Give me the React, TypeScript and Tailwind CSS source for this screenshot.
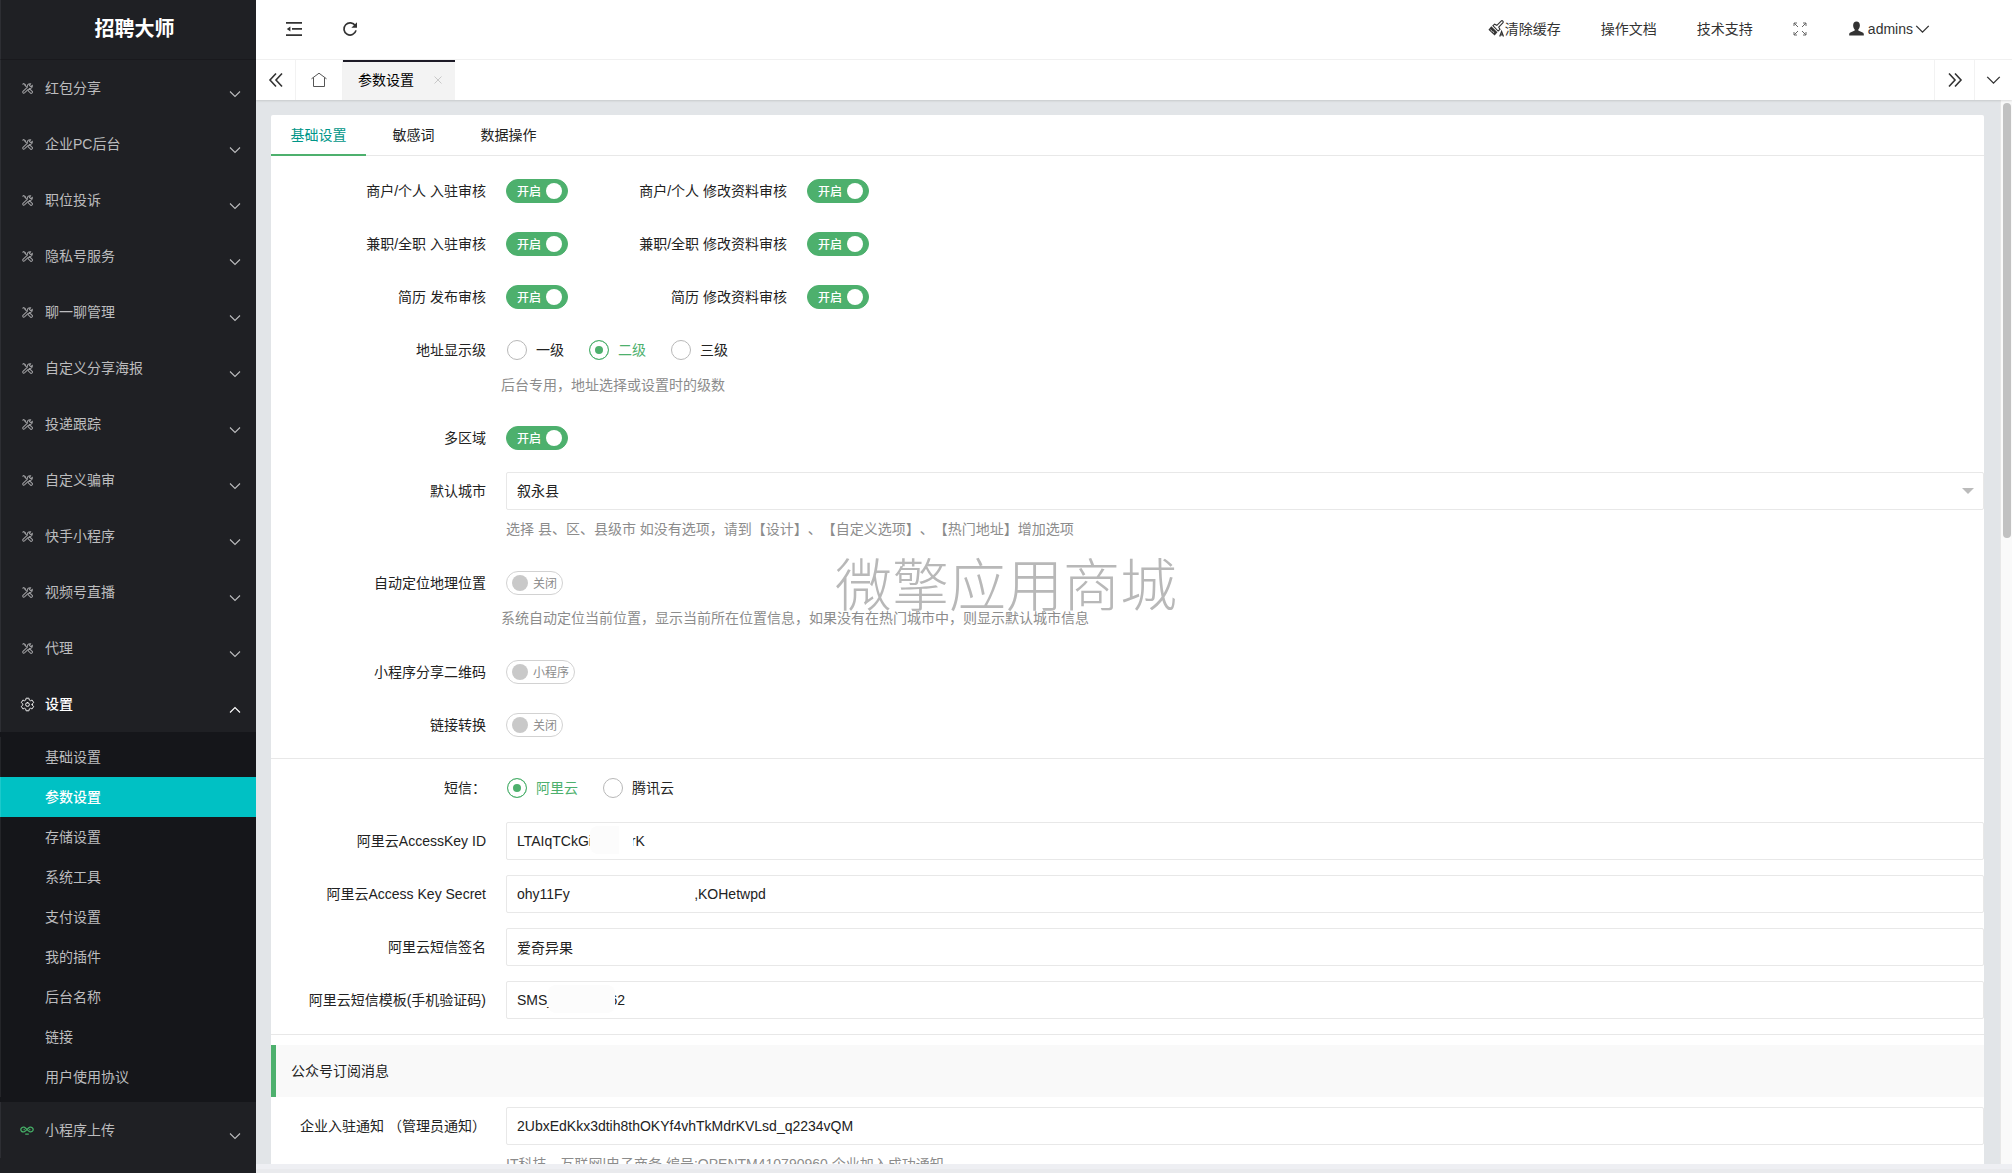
import { useState } from 'react';
import type { ReactNode } from 'react';
import clsx from 'clsx';
import { IoSettingsOutline } from 'react-icons/io5';

type SwitchProps = {
  id: string;
  on?: string;
  off?: string;
  defaultChecked?: boolean;
};

type RadioGroupProps = {
  name: string;
  options: string[];
  defaultValue: string;
};

const menuItems = [
  '红包分享',
  '企业PC后台',
  '职位投诉',
  '隐私号服务',
  '聊一聊管理',
  '自定义分享海报',
  '投递跟踪',
  '自定义骗审',
  '快手小程序',
  '视频号直播',
  '代理',
];

const settingItems = [
  '基础设置',
  '参数设置',
  '存储设置',
  '系统工具',
  '支付设置',
  '我的插件',
  '后台名称',
  '链接',
  '用户使用协议',
];

const auditRows = [
  { id: 'merchant', join: '商户/个人 入驻审核', edit: '商户/个人 修改资料审核' },
  { id: 'job', join: '兼职/全职 入驻审核', edit: '兼职/全职 修改资料审核' },
  { id: 'resume', join: '简历 发布审核', edit: '简历 修改资料审核' },
];

function ToolsIcon() {
  return (
    <svg viewBox="0 0 16 16" className="ml-0.5 size-[11px] text-[#9c9c9f]" fill="none" stroke="currentColor" strokeWidth="1.5">
      <path d="M.8 2.2 2.4.8l2.400 1.400.4 2L8 7M3.200 3.600l1.600-1.600" />
      <path d="m9.200 10 1.800-1.600 4.200 4.200c.8 1-1.400 3.200-2.400 2.400L9 11.400Z" />
      <path d="M6.800 7 1.400 12.200c-1.200 1.400.8 3.400 2.200 2.200L9 9.200" />
      <path d="M7.800 6.400C7 3.400 9.200.6 12.400 1.200L10.800 3.400l1.800 1.800 2.400-1.600c.4 3-2 5.200-5 4.400" />
    </svg>
  );
}

function InfinityIcon() {
  return (
    <svg viewBox="0 0 14 9" className="h-[9px] w-3.5 text-[#45ad66]" fill="none" stroke="currentColor" strokeWidth="1.3">
      <path d="M4.800 3.600H3.600M9.200 3.600h1.200M5.200 8.200h3.600" />
      <path d="M4 5.800C2 6.200.8 5 .8 3.600S2.400.8 4 1.200c2.400.6 3.400 4 6 4.600 1.800.2 3.200-.8 3.200-2.200S11.600.8 10 1.200C7.600 1.800 6.600 5.200 4 5.800Z" />
    </svg>
  );
}

function Chevron({ up, className }: { up?: boolean; className?: string }) {
  return (
    <svg viewBox="0 0 12 8" className={className} fill="none" stroke="currentColor" strokeWidth="1.1">
      <path d={up ? 'M1 6.500 6 1.500l5 5' : 'M1 1.500l5 5 5-5'} />
    </svg>
  );
}

function DoubleChevron({ right }: { right?: boolean }) {
  return (
    <svg viewBox="0 0 16 16" className="size-4" fill="none" stroke="currentColor" strokeWidth="1.6">
      <path d={right ? 'm2 1.500 6 6.500-6 6.500M8 1.500 14 8l-6 6.500' : 'M8 1.500 2 8l6 6.500M14 1.500 8 8l6 6.500'} />
    </svg>
  );
}

function ShrinkIcon() {
  return (
    <svg viewBox="0 0 16 14" className="h-3.5 w-4" fill="currentColor">
      <path d="M0 0h16v1.700H0zM6 6.100h10v1.700H6zM0 12.300h16V14H0zM4.400 4.600v4.800L.8 7z" />
    </svg>
  );
}

function RefreshIcon() {
  return (
    <svg viewBox="0 0 16 16" className="size-4">
      <path d="M13.300 4.800A6.100 6.100 0 1 0 14 9.400" fill="none" stroke="currentColor" strokeWidth="1.700" />
      <path d="M15 1.200v5.600H9.400z" fill="currentColor" />
    </svg>
  );
}

function HomeIcon() {
  return (
    <svg viewBox="0 0 16 16" className="size-4" fill="none" stroke="currentColor" strokeWidth="1">
      <path d="M.5 6.800 8 1.200l7.500 5.600M2.500 5.500v9h11v-9" />
    </svg>
  );
}

function BrushIcon() {
  return (
    <svg viewBox="0 0 18 18" className="size-[17px]">
      <path d="M3.500 6.500 10 13l-3 3.500L.5 10.200z" fill="currentColor" />
      <path d="m2.800 10 1.600 2.400M5 11.800l1.300 2" stroke="#fff" strokeWidth=".7" />
      <path d="m5.200 6 5.500 5.700 2-1.700-1.300-2.600 4.300-4.400a1.200 1.200 0 0 0-1.800-1.800L9.400 5.600 7 4.400z" fill="#fff" stroke="currentColor" strokeWidth="1.200" />
      <path d="m12.400 17.500 2-5.300 2 5.300M13 15.700h2.800" fill="none" stroke="currentColor" strokeWidth="1.300" />
    </svg>
  );
}

function FullscreenIcon() {
  return (
    <svg viewBox="0 0 14 14" className="size-3.5" fill="none" stroke="currentColor" strokeWidth="1">
      <path d="M1 4V1h3M1 1l4 4M10 1h3v3M13 1 9 5M1 10v3h3M1 13l4-4M13 10v3h-3M13 13 9 9" />
    </svg>
  );
}

function UserIcon() {
  return (
    <svg viewBox="0 0 16 16" className="size-[15px]" fill="currentColor">
      <path d="M8 .5c2.300 0 3.600 1.600 3.600 4 0 1.900-.7 3.600-1.700 4.500v1.200l4.600 2c.9.400 1.300 1 1.300 2v1.300H.2v-1.300c0-1 .4-1.600 1.300-2l4.600-2V9c-1-.9-1.700-2.600-1.700-4.500 0-2.400 1.300-4 3.600-4Z" />
    </svg>
  );
}

function MenuButton({ icon, label, open }: { icon: ReactNode; label: string; open?: boolean }) {
  return (
    <button
      type="button"
      className={clsx(
        'flex h-14 w-full items-center border-l border-[#2d2e33] pr-[15px] pl-[19px] text-left text-sm',
        open ? 'text-white' : 'text-[#bcbcbe]'
      )}
    >
      <span className="flex w-[25px] shrink-0">{icon}</span>
      <span className={clsx('flex-1', open ? 'font-medium' : 'font-normal')}>{label}</span>
      <Chevron up={open} className="mt-3 h-2 w-3" />
    </button>
  );
}

function Sidebar() {
  return (
    <aside className="flex w-64 shrink-0 flex-col overflow-hidden bg-[#1f2024]">
      <div className="flex h-[60px] shrink-0 items-center justify-center border-b border-l border-b-[#19191d] border-l-[#2d2e33] pb-0.5 pl-3 text-xl font-bold text-white">
        招聘大师
      </div>
      <nav>
        {menuItems.map((item) => (
          <MenuButton key={item} icon={<ToolsIcon />} label={item} />
        ))}
        <MenuButton icon={<IoSettingsOutline className="size-[15px]" />} label="设置" open />
        <ul className="bg-[#15161a] py-[5px]">
          {settingItems.map((item) => (
            <li key={item}>
              <a
                href="#"
                className={clsx(
                  'flex h-10 items-center border-l pl-11 text-sm',
                  item === '参数设置'
                    ? 'border-[#1cc9cb] bg-[#00c1c4] font-medium text-white'
                    : 'border-[#242529] text-[#bcbcbe]'
                )}
              >
                {item}
              </a>
            </li>
          ))}
        </ul>
        <MenuButton icon={<InfinityIcon />} label="小程序上传" />
      </nav>
    </aside>
  );
}

function Header() {
  return (
    <header className="flex h-[60px] shrink-0 items-center justify-between border-b border-[#f2f2f2] bg-white pr-[82px] pb-0.5 pl-[30px] text-sm text-[#333]">
      <div className="flex items-center gap-10">
        <button type="button" aria-label="侧边伸缩">
          <ShrinkIcon />
        </button>
        <button type="button" aria-label="刷新">
          <RefreshIcon />
        </button>
      </div>
      <div className="flex items-center gap-10">
        <button type="button" className="flex items-center">
          <BrushIcon />
          清除缓存
        </button>
        <a href="#">操作文档</a>
        <a href="#">技术支持</a>
        <button type="button" aria-label="全屏" className="text-[#666]">
          <FullscreenIcon />
        </button>
        <button type="button" className="ml-0.5 flex items-center">
          <UserIcon />
          <span className="ml-1">admins</span>
          <Chevron className="ml-0.5 h-2.5 w-[15px]" />
        </button>
      </div>
    </header>
  );
}

function PageTabs() {
  return (
    <div className="z-10 flex h-10 shrink-0 bg-white text-sm text-[#333] shadow-[0_1px_2px_rgba(0,0,0,0.12)]">
      <button type="button" aria-label="向左" className="flex w-10 items-center justify-center border-r border-[#f2f2f2]">
        <DoubleChevron />
      </button>
      <button type="button" aria-label="主页" className="flex w-[47px] items-center justify-center border-r border-[#f2f2f2] text-[#555]">
        <HomeIcon />
      </button>
      <div className="flex w-28 items-center justify-between border-t-2 border-[#1c1a26] bg-[#f3f3f3] pr-[13px] pb-0.5 pl-[15px] text-black">
        <span>参数设置</span>
        <button type="button" aria-label="关闭" className="text-[#c8c8c8]">
          <svg viewBox="0 0 8 8" className="size-2" fill="none" stroke="currentColor">
            <path d="m.5.5 7 7M7.500.5l-7 7" />
          </svg>
        </button>
      </div>
      <button type="button" aria-label="向右" className="ml-auto flex w-10 items-center justify-center border-l border-[#f2f2f2]">
        <DoubleChevron right />
      </button>
      <button type="button" aria-label="更多" className="flex w-[38px] items-center justify-center border-l border-[#f2f2f2]">
        <Chevron className="h-2.5 w-[15px]" />
      </button>
    </div>
  );
}

function Switch({ id, on = '开启', off = '关闭', defaultChecked = false }: SwitchProps) {
  const [checked, setChecked] = useState(defaultChecked);

  return (
    <span
      className={clsx(
        'relative flex h-6 items-center gap-[5px] rounded-full border px-[5px] text-xs',
        checked
          ? 'border-[#4db06d] bg-[#4db06d] pl-2.5 text-white'
          : 'flex-row-reverse border-[#d2d2d2] bg-white text-[#8c8c8c]'
      )}
    >
      <input
        id={id}
        type="checkbox"
        role="switch"
        checked={checked}
        onChange={(e) => setChecked(e.target.checked)}
        className="absolute inset-0 size-full cursor-pointer appearance-none"
      />
      <span className={clsx('pt-0.5', checked && 'font-medium')}>{checked ? on : off}</span>
      <span className={clsx('size-4 rounded-full', checked ? 'bg-white' : 'bg-[#c9c9c9]')} />
    </span>
  );
}

function RadioGroup({ name, options, defaultValue }: RadioGroupProps) {
  const [value, setValue] = useState(defaultValue);

  return (
    <div className="flex gap-[25px] pl-px">
      {options.map((option) => (
        <label
          key={option}
          className={clsx('flex items-center gap-[9px]', value === option ? 'text-[#4db06d]' : 'text-[#222]')}
        >
          <input
            type="radio"
            name={name}
            checked={value === option}
            onChange={() => setValue(option)}
            className="size-5 appearance-none rounded-full border border-[#b8b8b8] bg-white checked:border-[#4db06d] checked:bg-[#4db06d] checked:shadow-[inset_0_0_0_5px_#fff]"
          />
          {option}
        </label>
      ))}
    </div>
  );
}

function Row({ label, htmlFor, children }: { label: string; htmlFor?: string; children: ReactNode }) {
  return (
    <div className="mb-[15px] flex flex-wrap">
      {htmlFor ? (
        <label htmlFor={htmlFor} className="w-[230px] pr-[15px] text-right leading-[38px] whitespace-pre">
          {label}
        </label>
      ) : (
        <span className="w-[230px] pr-[15px] text-right leading-[38px] whitespace-pre">{label}</span>
      )}
      {children}
    </div>
  );
}

function Control({ children }: { children: ReactNode }) {
  return <div className="ml-[5px] flex h-[38px] flex-1 items-center">{children}</div>;
}

function TextField({ id, value, mask }: { id: string; value: string; mask?: string }) {
  return (
    <div className="relative flex size-full">
      <input
        id={id}
        type="text"
        defaultValue={value}
        className="size-full rounded-xs border border-[#e8e8e8] bg-white px-2.5 text-[#222] outline-none"
      />
      {mask && <span className={clsx('absolute top-1 h-7 bg-[#fcfcfc]', mask)} />}
    </div>
  );
}

function SettingsForm() {
  return (
    <form className="pt-4 text-sm text-[#222]">
      {auditRows.map((row) => (
        <Row key={row.id} label={row.join} htmlFor={`${row.id}-join`}>
          <Control>
            <div className="flex w-24">
              <Switch id={`${row.id}-join`} defaultChecked />
            </div>
            <label htmlFor={`${row.id}-edit`} className="mr-[5px] w-[200px] pr-[15px] text-right">
              {row.edit}
            </label>
            <Switch id={`${row.id}-edit`} defaultChecked />
          </Control>
        </Row>
      ))}
      <Row label="地址显示级">
        <Control>
          <RadioGroup name="level" options={['一级', '二级', '三级']} defaultValue="二级" />
        </Control>
        <p className="h-[35px] w-full pl-[230px] leading-8 text-[#8c8c8c]">后台专用，地址选择或设置时的级数</p>
      </Row>
      <Row label="多区域" htmlFor="multi-area">
        <Control>
          <Switch id="multi-area" defaultChecked />
        </Control>
      </Row>
      <Row label="默认城市" htmlFor="city">
        <Control>
          <div className="relative flex size-full">
            <select
              id="city"
              className="size-full appearance-none rounded-xs border border-[#e8e8e8] bg-white px-2.5 text-[#222] outline-none"
            >
              <option>叙永县</option>
            </select>
            <span className="pointer-events-none absolute top-4 right-2.5 border-x-6 border-t-6 border-x-transparent border-t-[#bbb]" />
          </div>
        </Control>
        <p className="h-[39px] w-full pl-[235px] leading-[38px] text-[#8c8c8c] [text-spacing-trim:space-all]">
          选择 县、区、县级市 如没有选项，请到【设计】、【自定义选项】、【热门地址】增加选项
        </p>
      </Row>
      <Row label="自动定位地理位置" htmlFor="auto-location">
        <Control>
          <Switch id="auto-location" />
        </Control>
        <p className="h-9 w-full pl-[230px] leading-8 text-[#8c8c8c]">
          系统自动定位当前位置，显示当前所在位置信息，如果没有在热门城市中，则显示默认城市信息
        </p>
      </Row>
      <Row label="小程序分享二维码" htmlFor="share-qr">
        <Control>
          <Switch id="share-qr" off="小程序" />
        </Control>
      </Row>
      <Row label="链接转换" htmlFor="link-convert">
        <Control>
          <Switch id="link-convert" />
        </Control>
      </Row>
      <hr className="-mt-px mb-2.5 border-[#e8e8e8]" />
      <Row label="短信：">
        <Control>
          <RadioGroup name="sms" options={['阿里云', '腾讯云']} defaultValue="阿里云" />
        </Control>
      </Row>
      <Row label="阿里云AccessKey ID" htmlFor="access-key">
        <Control>
          <TextField
            id="access-key"
            value={'LTAIqTCkGi' + ' '.repeat(10) + 'rK'}
            mask="left-[84px] w-[43px] rounded-l-lg border-r-[14px] border-white"
          />
        </Control>
      </Row>
      <Row label="阿里云Access Key Secret" htmlFor="access-secret">
        <Control>
          <TextField id="access-secret" value={'ohy11Fy' + ' '.repeat(32) + ',KOHetwpd'} />
        </Control>
      </Row>
      <Row label="阿里云短信签名" htmlFor="sms-sign">
        <Control>
          <TextField id="sms-sign" value="爱奇异果" />
        </Control>
      </Row>
      <Row label="阿里云短信模板(手机验证码)" htmlFor="sms-template">
        <Control>
          <TextField
            id="sms-template"
            value={'SMS_' + ' '.repeat(14) + '62'}
            mask="left-[42px] w-[67px] rounded-lg"
          />
        </Control>
      </Row>
      <hr className="mb-2.5 border-[#e8e8e8]" />
      <h2 className="mb-2.5 flex h-[52px] items-center border-l-5 border-[#4db06d] bg-[#f9f9f9] pl-[15px]">
        公众号订阅消息
      </h2>
      <Row label="企业入驻通知 （管理员通知）" htmlFor="join-notice">
        <Control>
          <TextField id="join-notice" value="2UbxEdKkx3dtih8thOKYf4vhTkMdrKVLsd_q2234vQM" />
        </Control>
        <p className="w-full pl-[235px] leading-[38px] text-[#8c8c8c]">
          IT科技、互联网|电子商务 编号:OPENTM410790960 企业加入成功通知
        </p>
      </Row>
    </form>
  );
}

export default function App() {
  return (
    <div className="flex h-screen overflow-hidden bg-white font-['Liberation_Sans','Noto_Sans_CJK_SC',sans-serif]">
      <Sidebar />
      <div className="flex min-w-0 flex-1 flex-col">
        <Header />
        <PageTabs />
        <div className="flex min-h-0 flex-1 bg-[#e2e5e8]">
          <main className="min-w-0 flex-1 overflow-hidden pt-[15px] pr-4 pl-[15px]">
            <div className="rounded-xs bg-white">
              <div role="tablist" className="flex h-[41px] border-b border-[#e8e8e8] text-sm text-[#222]">
                <button
                  type="button"
                  role="tab"
                  aria-selected="true"
                  className="-mb-px w-[95px] border-b-2 border-[#4db06d] text-[#009688]"
                >
                  基础设置
                </button>
                <button type="button" role="tab" aria-selected="false" className="w-[95px]">
                  敏感词
                </button>
                <button type="button" role="tab" aria-selected="false" className="w-[95px]">
                  数据操作
                </button>
              </div>
              <SettingsForm />
            </div>
          </main>
          <div className="w-3 border-l border-[#e8e8e8] bg-[#fafafa] pt-[3px] pl-0.5">
            <div className="h-[41%] w-2 rounded-full bg-[#c1c1c1]" />
          </div>
        </div>
        <div className="h-[9px] shrink-0 border-b-4 border-[#e9eaed] bg-[#eeeff3]" />
      </div>
      <div className="pointer-events-none fixed inset-0 flex items-center justify-center text-[57px] font-light text-[#b8b8b8]">
        微擎应用商城
      </div>
    </div>
  );
}
